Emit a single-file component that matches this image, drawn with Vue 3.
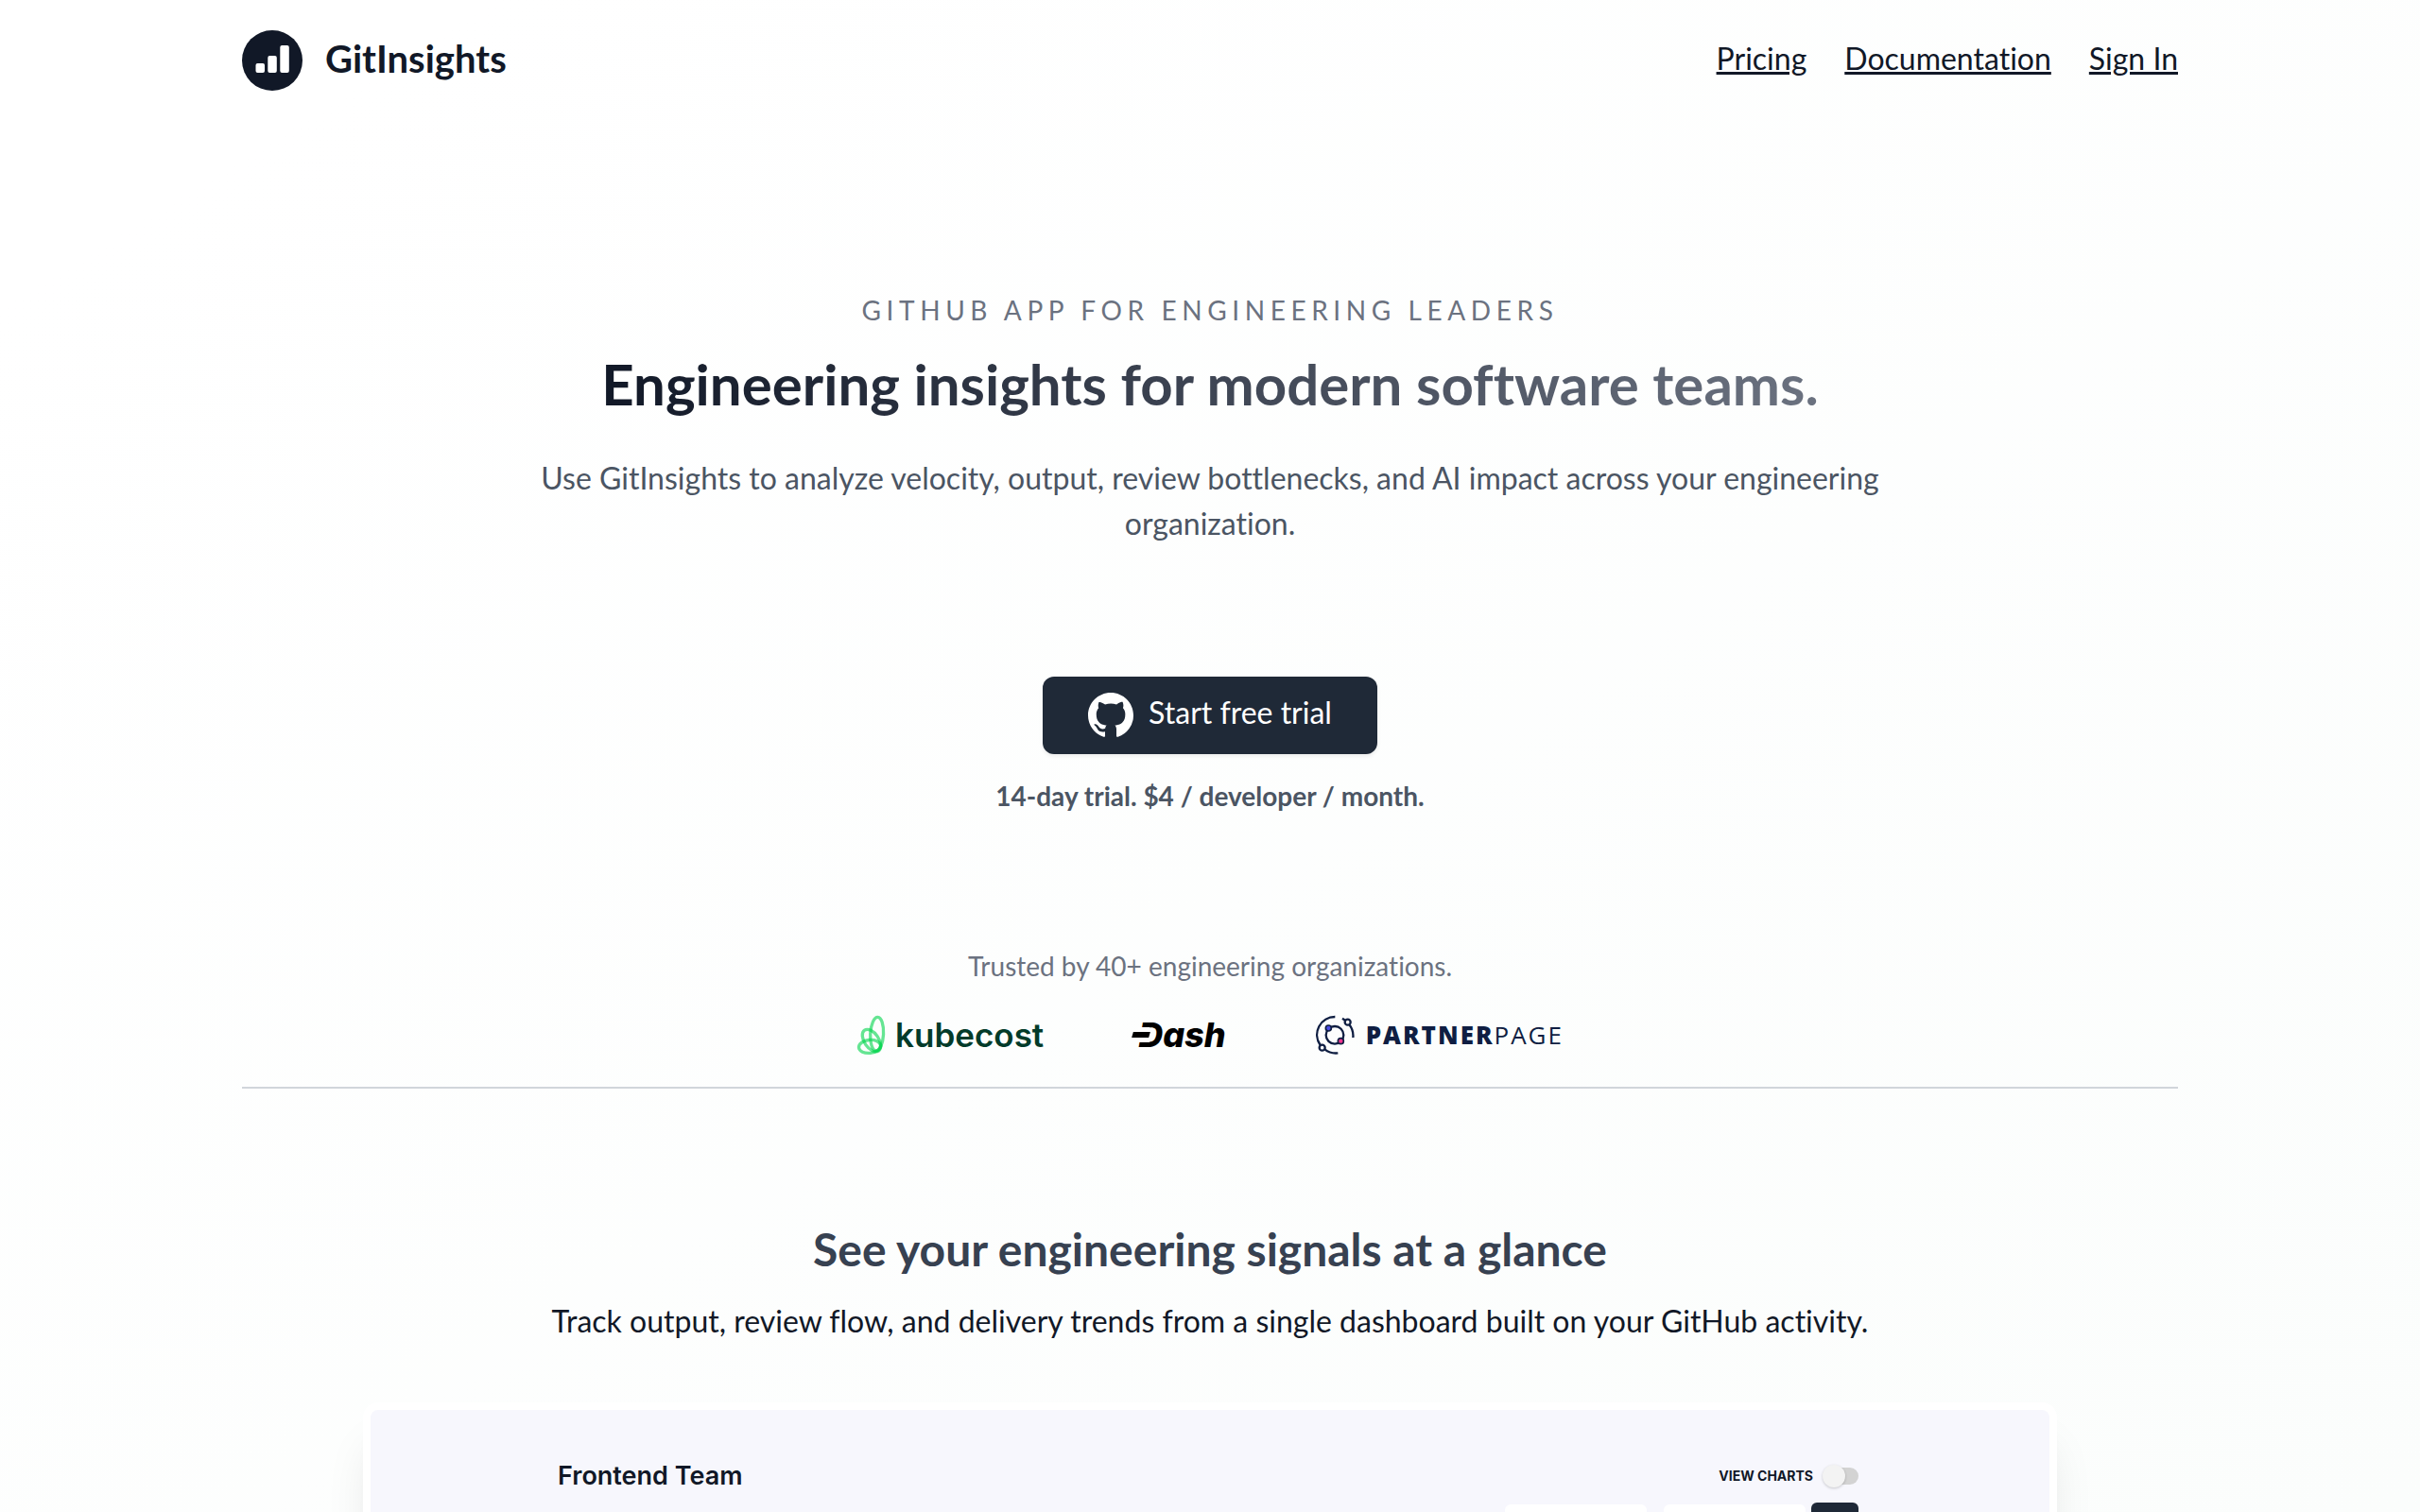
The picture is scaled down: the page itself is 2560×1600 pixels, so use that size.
<script setup>
const links = ['Pricing', 'Documentation', 'Sign In']
</script>

<template>
  <div class="page">
    <header class="container header">
      <a class="brand" href="#">
        <svg class="brand-mark" viewBox="0 0 64 64" aria-hidden="true">
          <circle cx="32" cy="32" r="32" fill="#111827" />
          <g fill="#fff">
            <rect x="14.500" y="35" width="9.500" height="10" rx="2" />
            <rect x="27.300" y="27" width="9.500" height="18" rx="2" />
            <rect x="40.300" y="16" width="9.500" height="29" rx="2" />
          </g>
        </svg>
        <span class="brand-name">GitInsights</span>
      </a>
      <nav class="nav" aria-label="Main">
        <a v-for="link in links" :key="link" href="#">{{ link }}</a>
      </nav>
    </header>

    <main>
      <section class="container hero">
        <p class="eyebrow">GITHUB APP FOR ENGINEERING LEADERS</p>
        <h1>Engineering insights for modern software teams.</h1>
        <p class="lead">
          Use GitInsights to analyze velocity, output, review bottlenecks, and AI impact across your
          engineering organization.
        </p>
        <button class="cta" type="button">
          <svg viewBox="0 0 16 16" aria-hidden="true">
            <path
              fill="#fff"
              d="M8 0C3.580 0 0 3.580 0 8c0 3.540 2.290 6.530 5.470 7.590.4.070.55-.17.55-.38 0-.19-.01-.82-.01-1.490-2.010.37-2.530-.49-2.690-.94-.09-.23-.48-.94-.82-1.130-.28-.15-.68-.52-.01-.53.63-.01 1.080.58 1.230.82.72 1.210 1.870.87 2.330.66.07-.52.28-.87.51-1.070-1.780-.2-3.640-.89-3.640-3.950 0-.87.31-1.590.82-2.150-.08-.2-.36-1.020.08-2.120 0 0 .67-.21 2.200.82.64-.18 1.320-.27 2-.27s1.360.09 2 .27c1.530-1.040 2.200-.82 2.200-.82.44 1.100.16 1.920.08 2.120.51.56.82 1.270.82 2.150 0 3.070-1.870 3.750-3.650 3.950.29.25.54.73.54 1.480 0 1.070-.01 1.930-.01 2.200 0 .21.15.46.55.38A8.010 8.010 0 0 0 16 8c0-4.420-3.580-8-8-8z"
            />
          </svg>
          <span>Start free trial</span>
        </button>
        <p class="note">14-day trial. $4 / developer / month.</p>
      </section>

      <section class="container trusted">
        <p>Trusted by 40+ engineering organizations.</p>
        <div class="logos">
          <div class="logo kubecost">
            <svg viewBox="0 0 93 130" aria-hidden="true">
              <g fill="none" stroke="#00d44b" stroke-opacity="0.6" stroke-width="10">
                <ellipse cx="65" cy="61" rx="21" ry="54" transform="rotate(3 65 61)" />
                <ellipse cx="48" cy="82" rx="23" ry="40" transform="rotate(-34 48 82)" />
                <ellipse cx="42" cy="101" rx="35" ry="21" transform="rotate(-6 42 101)" />
              </g>
            </svg>
            <span>kubecost</span>
          </div>
          <div class="logo dash"><span class="dash-d">D</span>ash</div>
          <div class="logo partner">
            <svg viewBox="0 0 126 126" aria-hidden="true">
              <g fill="none" stroke="#0f1e42" stroke-width="7">
                <path d="M64 6A57 57 0 0 0 17 96M31 109A57 57 0 0 0 73 121" />
                <path d="M87 11L96 17M109 31A57 57 0 0 1 121 72" />
                <circle cx="23" cy="104" r="9" />
                <circle cx="104" cy="23" r="9" />
                <circle cx="63" cy="64" r="28" />
              </g>
              <circle cx="43" cy="42" r="9" fill="#4b4ce6" stroke="#0f1e42" stroke-width="5" />
              <circle cx="82" cy="83" r="9" fill="#f0358e" stroke="#0f1e42" stroke-width="5" />
            </svg>
            <span><b>PARTNER</b>PAGE</span>
          </div>
        </div>
      </section>

      <section class="glance">
        <h2>See your engineering signals at a glance</h2>
        <p>Track output, review flow, and delivery trends from a single dashboard built on your GitHub activity.</p>
        <div class="preview">
          <div class="preview-head">
            <h3>Frontend Team</h3>
            <label class="toggle">
              VIEW CHARTS
              <input type="checkbox" role="switch" />
            </label>
          </div>
          <div class="filters">
            <div class="field"></div>
            <div class="field"></div>
            <button type="button" class="apply" aria-label="Apply"></button>
          </div>
        </div>
      </section>
    </main>
  </div>
</template>

<style>
body {
  margin: 0;
}
</style>

<style scoped>
.page {
  height: 100vh;
  overflow: hidden;
  background: linear-gradient(to bottom right, #ffffff 10%, #fbfdfc);
  color: #111827;
  font-family: Lato, sans-serif;
  font-size: 32px;
  font-variant-ligatures: none;
  line-height: 48px;
}
h1,
h2,
h3,
p {
  margin: 0;
}
.container {
  width: 80%;
  margin: 0 auto;
}
.header {
  display: flex;
  align-items: center;
  justify-content: space-between;
  padding-top: 32px;
}
.brand {
  display: flex;
  align-items: center;
  gap: 24px;
  color: inherit;
  text-decoration: none;
}
.brand-mark {
  width: 64px;
  height: 64px;
}
.brand-name {
  padding-bottom: 4px;
  font-size: 40px;
  font-weight: 700;
}
.nav {
  display: flex;
  gap: 40px;
  padding-bottom: 4px;
}
.nav a {
  color: inherit;
}
.hero {
  display: flex;
  flex-direction: column;
  align-items: center;
  padding-top: 208px;
  text-align: center;
}
.eyebrow {
  color: #6b7280;
  font-size: 28px;
  letter-spacing: 0.2em;
}
h1 {
  margin-top: 18px;
  padding: 0 2px;
  background: linear-gradient(to right, #111827, #6b7280);
  background-clip: text;
  color: transparent;
  font-size: 60px;
  font-weight: 700;
  line-height: 72px;
}
.lead {
  max-width: 1536px;
  margin-top: 40px;
  color: #4b5563;
}
.cta {
  display: flex;
  align-items: center;
  gap: 16px;
  height: 82px;
  margin-top: 138px;
  padding: 0 48px;
  border: 0;
  border-radius: 12px;
  background: #1f2937;
  box-shadow: 0 2px 4px rgb(0 0 0 / 8%);
  color: #fff;
  font: inherit;
}
.cta svg {
  width: 48px;
  height: 48px;
}
.cta span {
  padding-bottom: 6px;
}
.note {
  margin-top: 20px;
  color: #4b5563;
  font-size: 28px;
  font-weight: 700;
}
.trusted {
  margin-top: 132px;
  border-bottom: 2px solid #d1d5db;
  color: #6b7280;
  font-size: 28px;
  text-align: center;
}
.logos {
  display: flex;
  align-items: center;
  justify-content: center;
  gap: 94px;
  height: 98px;
  padding-bottom: 6px;
}
.logo {
  display: flex;
  align-items: center;
}
.kubecost {
  gap: 10px;
  color: #033b2a;
  font: 600 35px Inter, sans-serif;
}
.kubecost svg {
  width: 31px;
  height: 43px;
}
.dash {
  padding-left: 6px;
  color: #000;
  font: italic 800 36px Inter, sans-serif;
}
.dash-d {
  position: relative;
}
.dash-d::before {
  content: '';
  position: absolute;
  top: 14px;
  left: 0;
  width: 12px;
  height: 16px;
  background: #fefefe;
}
.dash-d::after {
  content: '';
  position: absolute;
  top: 19px;
  left: -6px;
  width: 18px;
  height: 6px;
  background: #000;
  transform: skewX(-16deg);
}
.partner {
  gap: 12px;
  color: #0f1e42;
  font: 500 26px 'Open Sans', sans-serif;
  letter-spacing: 2px;
}
.partner b {
  font-weight: 800;
}
.partner svg {
  width: 42px;
  height: 42px;
}
.glance {
  width: 70%;
  margin: 138px auto 0;
  text-align: center;
}
h2 {
  color: #374151;
  font-size: 48px;
  font-weight: 700;
  line-height: 64px;
}
.glance > p {
  margin-top: 20px;
}
.preview {
  min-height: 1000px;
  margin-top: 62px;
  padding: 50px 202px 0 198px;
  border: 8px solid #fff;
  border-radius: 16px;
  background: #f7f7fd;
  box-shadow:
    0 40px 50px -10px rgb(0 0 0 / 10%),
    0 20px 20px -10px rgb(0 0 0 / 4%);
  font-family: Inter, sans-serif;
}
.preview-head {
  display: flex;
  align-items: center;
  justify-content: space-between;
  height: 40px;
}
h3 {
  font-size: 27px;
  font-weight: 600;
}
.toggle {
  display: flex;
  align-items: center;
  gap: 12px;
  font-size: 14px;
  font-weight: 700;
}
.toggle input {
  appearance: none;
  position: relative;
  width: 36px;
  height: 18px;
  margin: 0;
  border-radius: 9px;
  background: #d3d3d3;
}
.toggle input::before {
  content: '';
  position: absolute;
  top: -3px;
  left: -2px;
  width: 24px;
  height: 24px;
  border-radius: 50%;
  background: #f3f3f3;
  box-shadow: 0 1px 3px rgb(0 0 0 / 20%);
}
.filters {
  display: flex;
  align-items: flex-start;
  justify-content: flex-end;
  margin-top: 8px;
}
.field {
  width: 150px;
  height: 56px;
  margin: 2px 18px 0 0;
  border-radius: 6px;
  background: #fff;
}
.field + .field {
  margin-right: 6px;
}
.apply {
  width: 50px;
  height: 60px;
  border: 0;
  border-radius: 6px;
  background: #1f2937;
}
</style>
